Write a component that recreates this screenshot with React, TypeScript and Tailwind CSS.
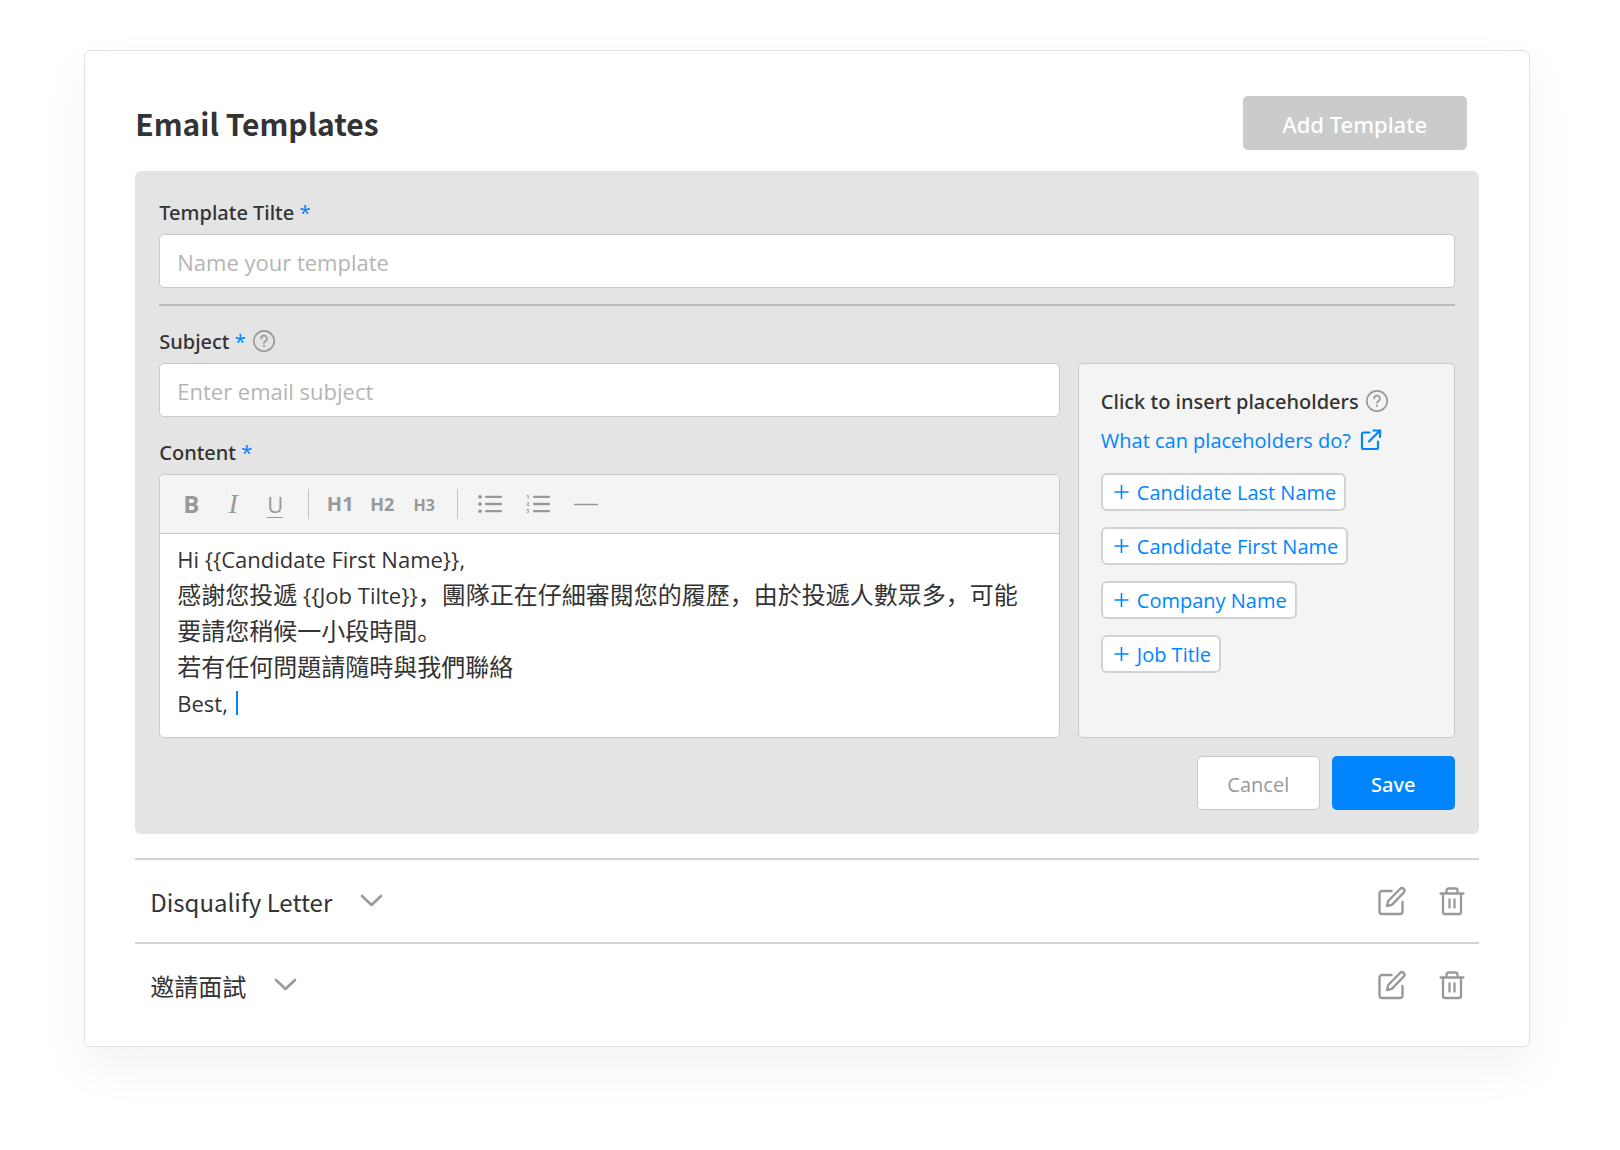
import React from "react";

const UI = "font-['Open_Sans','Noto_Sans_CJK_SC',sans-serif]";
const STRONG = "font-['Noto_Sans','Noto_Sans_CJK_SC',sans-serif] font-medium";
const CJK = "font-['Noto_Sans_CJK_SC',sans-serif]";

function Help({ label }: { label: string }) {
  return (
    <button type="button" aria-label={label} className="pb-0.5 text-[#999]">
      <svg width="24" height="24" viewBox="0 0 24 24" fill="none" stroke="currentColor" strokeWidth="1.7" strokeLinecap="round">
        <circle cx="12" cy="12" r="10.2" />
        <path d="M9.1 9.6a2.9 2.9 0 1 1 4.4 2.4c-.9.5-1.5 1-1.5 1.9" />
        <path d="M12 16.8v.1" strokeWidth="2" />
      </svg>
    </button>
  );
}

function Label({ htmlFor, id, children }: { htmlFor?: string; id?: string; children: string }) {
  return (
    <label htmlFor={htmlFor} id={id} className={`${STRONG} text-xl leading-7 text-[#333]`}>
      {children} <span className="font-normal text-[#0085ff]">*</span>
    </label>
  );
}

function Field({ id, placeholder }: { id: string; placeholder: string }) {
  return (
    <input
      id={id}
      type="text"
      placeholder={placeholder}
      className="mt-[7px] block h-[54px] w-full rounded-[5px] border border-[#c8c8c8] bg-white px-[17px] pt-0.5 text-[22px] text-[#333] outline-none placeholder:text-[#b5b5b5]"
    />
  );
}

function Tool({ label, className, children }: { label: string; className: string; children: React.ReactNode }) {
  return (
    <button type="button" aria-label={label} className={className}>
      {children}
    </button>
  );
}

function Toolbar() {
  const cell = "flex w-[42px] justify-center leading-8";
  const wide = "flex w-12 justify-center";
  return (
    <div role="toolbar" aria-label="Formatting" className="flex h-[59px] items-center rounded-t-[5px] border-b border-[#c8c8c8] bg-[#f4f4f4] pl-2.5 text-[#999]">
      <div className="flex items-baseline">
        <Tool label="Bold" className={`${cell} text-2xl font-bold`}>B</Tool>
        <Tool label="Italic" className={`${cell} font-['Liberation_Serif',serif] text-[28px] italic`}>I</Tool>
        <Tool label="Underline" className={`${cell} text-[22px]`}>
          <span className="-mt-1 border-b border-[#999] leading-7 h-7">U</span>
        </Tool>
      </div>
      <span className="mr-2.5 ml-3 h-[30px] w-px bg-[#c4c4c4]" />
      <div className="flex items-baseline font-bold">
        <Tool label="Heading 1" className={`${cell} text-xl`}>H1</Tool>
        <Tool label="Heading 2" className={`${cell} text-lg`}>H2</Tool>
        <Tool label="Heading 3" className={`${cell} text-base`}>H3</Tool>
      </div>
      <span className="mr-2 ml-3 h-[30px] w-px bg-[#c4c4c4]" />
      <Tool label="Bulleted list" className={wide}>
        <svg width="26" height="24" viewBox="0 0 26 24" fill="currentColor" stroke="currentColor" strokeLinecap="round">
          <path d="M9 4.8h15M9 12h15M9 19.2h15" strokeWidth="2.3" fill="none" />
          <circle cx="3" cy="4.8" r="1.5" strokeWidth=".8" />
          <circle cx="3" cy="12" r="1.5" strokeWidth=".8" />
          <circle cx="3" cy="19.2" r="1.5" strokeWidth=".8" />
        </svg>
      </Tool>
      <Tool label="Numbered list" className={wide}>
        <svg width="26" height="24" viewBox="0 0 26 24" fill="none" stroke="currentColor" strokeLinecap="round">
          <path d="M9 4.8h15M9 12h15M9 19.2h15" strokeWidth="2.3" />
          <path d="M2.3 3.6l.9-.5v3.4M2.1 10.8q1.9-.9 1.7.4L2.1 13.4h1.9M2.1 17.6h1.7l-1 1.2q1.6.4.8 1.600-.7.6-1.6.1" strokeWidth="1" />
        </svg>
      </Tool>
      <Tool label="Divider" className={wide}>
        <svg width="24" height="24" viewBox="0 0 24 24" stroke="currentColor">
          <path d="M0 12.5h24" strokeWidth="1.5" />
        </svg>
      </Tool>
    </div>
  );
}

const placeholders = ["Candidate Last Name", "Candidate First Name", "Company Name", "Job Title"];

function PlaceholderPanel() {
  return (
    <aside className="mt-[35px] w-[29.1%] shrink-0 rounded-[5px] border border-[#c8c8c8] bg-[#f4f4f4] px-[22px] pt-6">
      <div className="flex items-center gap-1.5">
        <h2 className={`${STRONG} text-xl leading-7 whitespace-nowrap text-[#333]`}>Click to insert placeholders</h2>
        <Help label="About inserting placeholders" />
      </div>
      <a href="#placeholders" className="mt-[11px] flex items-center gap-2 text-xl leading-7 whitespace-nowrap text-[#0085ff]">
        What can placeholders do?
        <svg width="24" height="24" viewBox="0 0 24 24" fill="none" stroke="currentColor" strokeWidth="2.2" strokeLinecap="round" strokeLinejoin="round">
          <path d="M10.5 3.500H4.600A1.600 1.600 0 0 0 3 5.100v13.300A1.600 1.600 0 0 0 4.600 20h12.800a1.600 1.600 0 0 0 1.600-1.600V12.500" />
          <path d="M14.500 1.500h6.500v6.500M21 1.500L10 12.500" strokeLinejoin="miter" />
        </svg>
      </a>
      <ul className="mt-[18px] space-y-4">
        {placeholders.map((name) => (
          <li key={name} className="flex">
            <button type="button" className="flex h-[38px] items-center gap-2 rounded-md border-2 border-[#d2d2d2] bg-white pr-2 pl-[11px] text-xl whitespace-nowrap text-[#0085ff]">
              <svg width="15" height="15" viewBox="0 0 15 15" stroke="currentColor" strokeWidth="1.6">
                <path d="M.5 7h14M7.5 0v14" />
              </svg>
              <span className="pt-0.5">{name}</span>
            </button>
          </li>
        ))}
      </ul>
    </aside>
  );
}

function TemplateRow({ name }: { name: string }) {
  return (
    <li className="flex h-[84px] items-center border-t-2 border-[#d2d2d2] pr-3 pl-[15px]">
      <button type="button" aria-expanded="false" className={`${CJK} flex items-center gap-7 text-2xl text-[#333]`}>
        <span className="pt-0.5">{name}</span>
        <svg width="24" height="24" viewBox="0 0 24 24" fill="none" stroke="#999" strokeWidth="2.6" strokeLinecap="round" strokeLinejoin="round">
          <path d="M2 7l9.500 9 9.500-9" />
        </svg>
      </button>
      <div className="ml-auto flex gap-[30px] text-[#999]">
        <button type="button" aria-label={`Edit ${name}`}>
          <svg width="30" height="30" viewBox="0 0 30 30" fill="none" stroke="currentColor" strokeWidth="2.4" strokeLinecap="round" strokeLinejoin="round">
            <path d="M14.500 5H5a2.500 2.500 0 0 0-2.500 2.500v18A2.500 2.500 0 0 0 5 28h18a2.500 2.500 0 0 0 2.500-2.500V16" />
            <path d="M23 3a2.600 2.600 0 0 1 3.700 3.700L14.800 18.800 10 20l1.200-5z" />
          </svg>
        </button>
        <button type="button" aria-label={`Delete ${name}`}>
          <svg width="30" height="30" viewBox="0 0 30 30" fill="none" stroke="currentColor" strokeWidth="2.3" strokeLinecap="round" strokeLinejoin="round">
            <path d="M3.500 7.500h23M9.500 7V4.500a2 2 0 0 1 2-2h7a2 2 0 0 1 2 2V7M6 8v18a2 2 0 0 0 2 2h14a2 2 0 0 0 2-2V8M12.500 13.500v8M17.500 13.500v8" />
          </svg>
        </button>
      </div>
    </li>
  );
}

export default function App() {
  return (
    <div className={`${UI} min-h-screen bg-white px-[5.2%] py-[50px]`}>
      <main className="mr-[6px] rounded-md border border-[#e2e2e2] bg-white px-[50px] pt-[45px] pb-5 shadow-[0_20px_50px_rgba(0,0,0,0.05)]">
        <header className="flex items-center justify-between pr-3">
          <h1 className={`${CJK} text-[30px] font-bold text-[#333]`}>Email Templates</h1>
          <button type="button" disabled className={`${STRONG} h-[54px] w-56 rounded-[5px] bg-[#cbcbcb] pt-[3px] text-[22px] text-white`}>
            Add Template
          </button>
        </header>

        <form className="mt-[21px] rounded-md bg-[#e4e4e4] px-6 pt-7 pb-6">
          <div className="flex">
            <Label htmlFor="title">Template Tilte</Label>
          </div>
          <Field id="title" placeholder="Name your template" />
          <hr className="mt-4 border-t-2 border-[#bababa]" />

          <div className="mt-[22px] flex gap-[18px]">
            <div className="min-w-0 flex-1">
              <div className="flex h-7 items-center gap-1.5">
                <Label htmlFor="subject">Subject</Label>
                <Help label="About the subject" />
              </div>
              <Field id="subject" placeholder="Enter email subject" />
              <div className="mt-[22px] flex">
                <Label id="content-label">Content</Label>
              </div>
              <div className="mt-[7px] rounded-[5px] border border-[#c8c8c8] bg-white">
                <Toolbar />
                <div
                  role="textbox"
                  aria-multiline="true"
                  aria-labelledby="content-label"
                  contentEditable
                  suppressContentEditableWarning
                  className="min-h-[203px] pt-[7px] pr-6 pb-4 pl-[17px] text-2xl leading-9 text-[#333] outline-none"
                >
                  <p className="text-[22px] leading-9">Hi {"{{Candidate First Name}}"},</p>
                  <p>
                    感謝您投遞<span className="text-[22px] leading-9"> {"{{Job Tilte}}"}</span>
                    ，團隊正在仔細審閱您的履歷，由於投遞人數眾多，可能要請您稍候一小段時間。
                  </p>
                  <p>若有任何問題請隨時與我們聯絡</p>
                  <p className="flex items-center gap-2 text-[22px] leading-9">
                    Best,
                    <span className="h-6 w-0.5 bg-[#0085ff]" />
                  </p>
                </div>
              </div>
            </div>
            <PlaceholderPanel />
          </div>

          <div className="mt-[18px] flex justify-end gap-3">
            <button type="button" className="h-[54px] w-[123px] rounded-[5px] border border-[#c8c8c8] bg-white pt-[3px] text-xl text-[#999]">
              Cancel
            </button>
            <button type="submit" className={`${STRONG} h-[54px] w-[123px] rounded-[5px] bg-[#0085ff] pt-[3px] text-xl text-white`}>
              Save
            </button>
          </div>
        </form>

        <ul className="mt-6">
          <TemplateRow name="Disqualify Letter" />
          <TemplateRow name="邀請面試" />
        </ul>
      </main>
    </div>
  );
}
